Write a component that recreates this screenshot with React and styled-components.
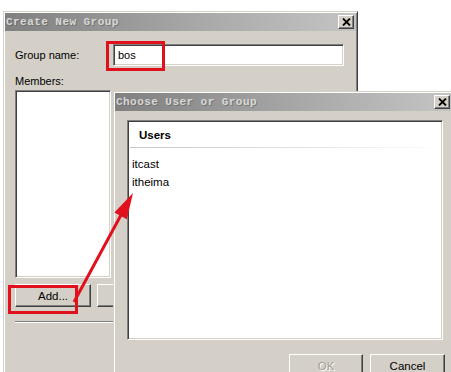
import React from "react";
import styled, { createGlobalStyle } from "styled-components";

const Global = createGlobalStyle`
  html, body { margin: 0; padding: 0; background: #fff; }
  body { font-family: "Liberation Sans", Arial, sans-serif; font-size: 11px; color: #000; }
`;

const Desk = styled.div`
  position: relative;
  width: 451px;
  height: 372px;
  overflow: hidden;
  background: #fff;
`;

const Win = styled.div`
  position: absolute;
  left: ${(p) => p.$x}px;
  top: ${(p) => p.$y}px;
  width: ${(p) => p.$w}px;
  height: ${(p) => p.$h}px;
  box-sizing: border-box;
  background: #d4d0c8;
  border: 1px solid;
  border-color: #d4d0c8 #404040 #404040 #d4d0c8;
  box-shadow: inset 1px 1px 0 #fff, inset -1px -1px 0 #808080;
  padding: 1px;
  display: flex;
  flex-direction: column;
`;

const TitleBar = styled.div`
  height: 18px;
  flex: none;
  display: flex;
  align-items: center;
  justify-content: space-between;
  padding: 0 2px 0 1px;
  background: linear-gradient(90deg, #808080 0%, #a8a8a8 55%, #c4c4c4 100%);
`;

const TitleText = styled.span`
  font-family: "Liberation Mono", "DejaVu Sans Mono", monospace;
  font-weight: bold;
  font-size: 11px;
  letter-spacing: 0.45px;
  color: #d8d8d4;
  text-shadow: 1px 1px 0 rgba(90, 90, 90, 0.55);
`;

const CloseBtn = styled.div`
  width: 16px;
  height: 14px;
  box-sizing: border-box;
  background: #d4d0c8;
  border: 1px solid;
  border-color: #fff #404040 #404040 #fff;
  box-shadow: inset -1px -1px 0 #808080;
  display: flex;
  align-items: center;
  justify-content: center;
`;

const Body = styled.div`
  display: flex;
  flex-direction: column;
  padding: ${(p) => p.$pad};
`;

const Row = styled.div`
  display: flex;
  align-items: center;
`;

const Label = styled.span`
  width: ${(p) => p.$w || "auto"};
  line-height: 14px;
  margin-top: ${(p) => p.$mt || 0}px;
`;

const Sunken = styled.div`
  box-sizing: border-box;
  width: ${(p) => p.$w}px;
  height: ${(p) => p.$h}px;
  margin-top: ${(p) => p.$mt || 0}px;
  background: #fff;
  border: 1px solid;
  border-color: #808080 #fff #fff #808080;
  box-shadow: inset 1px 1px 0 #404040, inset -1px -1px 0 #d4d0c8;
  padding: 1px 2px;
  display: flex;
  flex-direction: column;
`;

const InputText = styled.span`
  line-height: 18px;
  padding-left: 2px;
`;

const BtnRow = styled.div`
  display: flex;
  gap: ${(p) => p.$gap}px;
  justify-content: ${(p) => p.$justify || "flex-start"};
  margin-top: ${(p) => p.$mt}px;
  padding-right: ${(p) => p.$pr || 0}px;
`;

const Button = styled.div`
  box-sizing: border-box;
  flex: none;
  width: ${(p) => p.$w}px;
  height: 23px;
  background: #d4d0c8;
  border: 1px solid;
  border-color: #fff #404040 #404040 #fff;
  box-shadow: inset -1px -1px 0 #808080;
  display: flex;
  align-items: center;
  justify-content: center;
  font-size: 11.5px;
  color: ${(p) => (p.$disabled ? "#a09c94" : "#000")};
  text-shadow: ${(p) => (p.$disabled ? "1px 1px 0 #fff" : "none")};
`;

const Separator = styled.div`
  height: 0;
  border-top: 1px solid #808080;
  border-bottom: 1px solid #fff;
  margin-top: ${(p) => p.$mt}px;
  margin-right: -20px;
`;

const ListHeader = styled.div`
  height: 25px;
  flex: none;
  display: flex;
  align-items: center;
  padding-left: 9px;
  font-weight: bold;
  font-size: 11.5px;
  background: #fff;
  border-bottom: 1px solid transparent;
  border-image: linear-gradient(90deg, #c8c8c8 0%, #e4e4e4 60%, #fff 100%) 1;
`;

const Items = styled.div`
  display: flex;
  flex-direction: column;
  padding: 7px 0 0 2px;
`;

const Item = styled.div`
  line-height: 18px;
  font-size: 11.5px;
`;

const Overlay = styled.svg`
  position: absolute;
  left: 0;
  top: 0;
  pointer-events: none;
`;

const XIcon = () => (
  <svg width="9" height="8" viewBox="0 0 9 8">
    <path d="M1 0.5 L8 7.5 M8 0.5 L1 7.5" stroke="#000" strokeWidth="1.8" />
  </svg>
);

export default function App() {
  return (
    <>
      <Global />
      <Desk>
        <Win $x={3} $y={11} $w={355} $h={390}>
          <TitleBar>
            <TitleText>Create New Group</TitleText>
            <CloseBtn>
              <XIcon />
            </CloseBtn>
          </TitleBar>
          <Body $pad="13px 0 0 10px">
            <Row>
              <Label $w="98px">Group name:</Label>
              <Sunken $w={231} $h={22}>
                <InputText>bos</InputText>
              </Sunken>
            </Row>
            <Label $mt={8}>Members:</Label>
            <Sunken $w={96} $h={188} $mt={2} />
            <BtnRow $gap={6} $mt={6}>
              <Button $w={76}>Add...</Button>
              <Button $w={76} />
            </BtnRow>
            <Separator $mt={14} />
          </Body>
        </Win>

        <Win $x={113} $y={91} $w={341} $h={300}>
          <TitleBar>
            <TitleText>Choose User or Group</TitleText>
            <CloseBtn>
              <XIcon />
            </CloseBtn>
          </TitleBar>
          <Body $pad="9px 0 0 12px">
            <Sunken $w={316} $h={220}>
              <ListHeader>Users</ListHeader>
              <Items>
                <Item>itcast</Item>
                <Item>itheima</Item>
              </Items>
            </Sunken>
            <BtnRow $gap={7} $mt={14} $justify="flex-end" $pr={7}>
              <Button $w={74} $disabled>
                OK
              </Button>
              <Button $w={75}>Cancel</Button>
            </BtnRow>
          </Body>
        </Win>

        <Overlay width="451" height="372" viewBox="0 0 451 372">
          <rect x="107.5" y="42.5" width="56" height="27" fill="none" stroke="#e0101c" strokeWidth="3" />
          <rect x="9.5" y="286.5" width="67" height="26" fill="none" stroke="#e0101c" strokeWidth="3" />
          <line x1="74" y1="302" x2="121" y2="215" stroke="#e0101c" strokeWidth="3" />
          <polygon points="133,193 126.8,219.2 114.4,212.6" fill="#e0101c" />
        </Overlay>
      </Desk>
    </>
  );
}
